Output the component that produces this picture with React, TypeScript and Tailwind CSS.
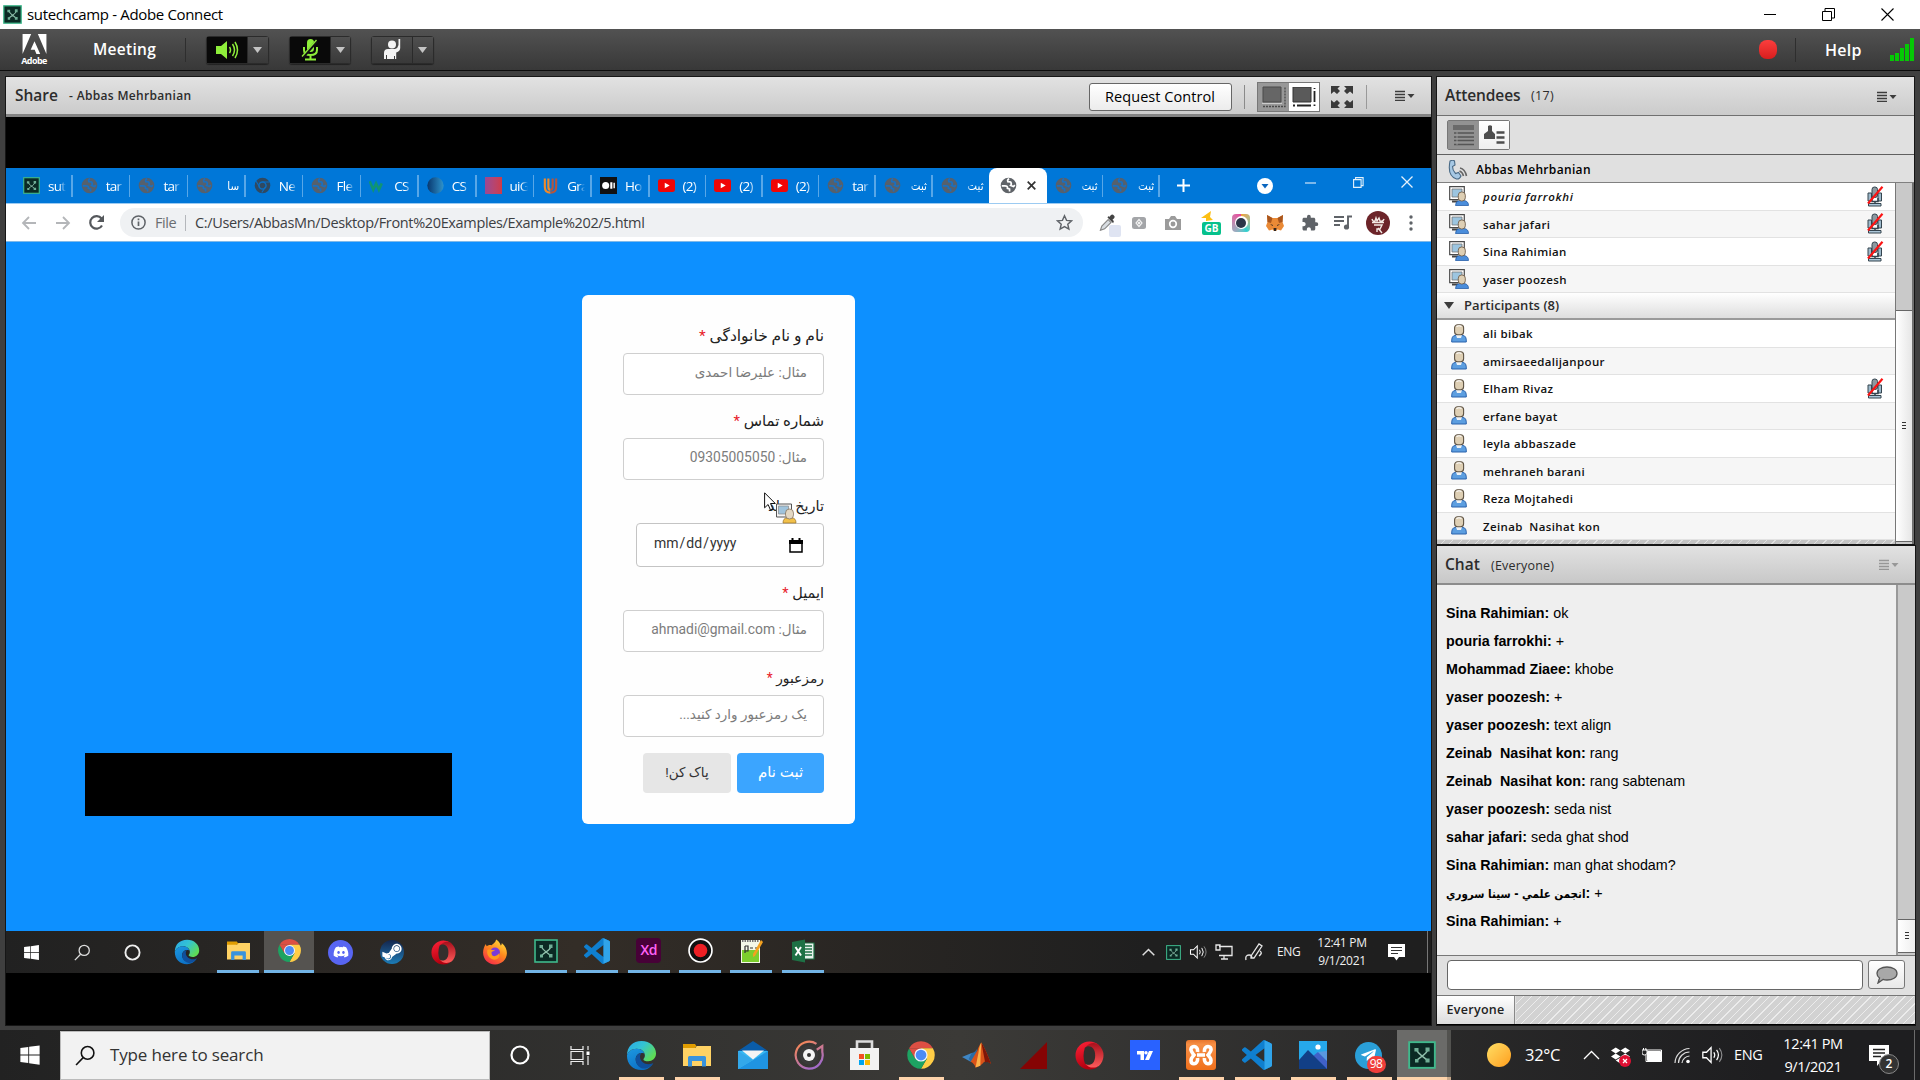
import React from 'react';
import { FaDiscord, FaSteamSymbol, FaWindows, FaTelegramPlane, FaDropbox } from 'react-icons/fa';
import { MdExtension } from 'react-icons/md';

type P = { s?: number };

const Svg = ({ w = 24, h, vb = '0 0 24 24', children, c = '' }: { w?: number; h?: number; vb?: string; children: React.ReactNode; c?: string }) => (
  <svg width={w} height={h ?? w} viewBox={vb} fill="none" className={'shrink-0 ' + c}>{children}</svg>
);

const Connect = ({ s = 18 }: P) => (
  <Svg w={s}>
    <rect x="1" y="1" width="22" height="22" fill="#0b2a24" stroke="#3fb98c" strokeWidth="1.600" />
    <path d="M7 7c2 5 5 5 10 10M17 7c-1 5-5 5-10 10" stroke="#8fbfab" strokeWidth="1.300" />
    <path d="M5.500 6h3.500v3H5.500zM15 5.500h3.500v3.500H15zM6 15.500h3v3H6zM15 15h3.500v3.500H15z" fill="#6fae95" />
  </Svg>
);

const Edge = ({ s = 30 }: P) => (
  <Svg w={s} vb="0 0 32 32">
    <defs>
      <linearGradient id="eg1" x1="0" y1="0" x2="1" y2=".6"><stop offset="0" stopColor="#2aa7e8" /><stop offset=".5" stopColor="#33c3d3" /><stop offset="1" stopColor="#5fdc55" /></linearGradient>
      <linearGradient id="eg2" x1="0" y1="0" x2=".6" y2="1"><stop offset="0" stopColor="#1c98e0" /><stop offset="1" stopColor="#0c6fc4" /></linearGradient>
    </defs>
    <path d="M1 16C1 7 7 1 16 1s15 6 15 13c0 5-4 8-8 8-3 0-5-1-5-2 0-.8 1.500-1.500 1.500-4C19.500 12 16 9 11 9 6 9 2 12 1 16z" fill="url(#eg1)" />
    <path d="M1 16c1-4 5-7 10-7 4 0 7 2 8 5-6-2-9 2-9 6 0 5 4 8 9 8 3 0 6-1 9-4-3 5-7 7-12 7C7 31 1 25 1 16z" fill="url(#eg2)" />
    <path d="M10 20c0-3 2-6 6-6.500-1 1-1.500 2.500-1.500 4 0 4 4 7.500 9 7.500 2 0 3.500-.6 4.800-1.200-2 3-5.300 5.700-9.300 5.700-5 0-9-4.500-9-9.500z" fill="#0f4f9c" />
  </Svg>
);

const Folder = ({ s = 28 }: P) => (
  <Svg w={s} vb="0 0 28 28">
    <path d="M0 3h12l2 3h-2v3H0z" fill="#e09c00" />
    <path d="M0 7h12l2-2h14v20H0z" fill="#ffd264" />
    <path d="M5 25.500V16.500q0-1.500 1.500-1.500h15q1.500 0 1.500 1.500v9h-4V20h-10v5.500z" fill="#3a93dc" />
  </Svg>
);

const Chrome = ({ s = 28 }: P) => (
  <Svg w={s} vb="0 0 48 48">
    <path d="M4.950 13A22 22 0 0 1 43.050 13H24z" fill="#dd4f43" />
    <path d="M43.050 13A22 22 0 0 1 24 46l9.500-16.500L24 13z" fill="#ffcd46" />
    <path d="M24 46A22 22 0 0 1 4.950 13l9.550 16.500h19z" fill="#1da362" />
    <path d="M4.950 13L14.500 29.500 24 13z" fill="#dd4f43" />
    <circle cx="24" cy="24" r="10.500" fill="#f3f6fb" />
    <circle cx="24" cy="24" r="8.600" fill="#4c8bf5" />
  </Svg>
);

const Opera = ({ s = 28 }: P) => (
  <Svg w={s} vb="0 0 28 28">
    <defs>
      <linearGradient id="og" x1="0" y1="0" x2=".3" y2="1"><stop offset="0" stopColor="#ff2238" /><stop offset="1" stopColor="#b3000f" /></linearGradient>
      <linearGradient id="oh" x1="0" y1="0" x2="0" y2="1"><stop offset="0" stopColor="#a8101c" /><stop offset="1" stopColor="#ff5b5b" /></linearGradient>
    </defs>
    <path d="M14 .5a13.500 13.500 0 1 0 0 27 13.500 13.500 0 0 0 9-3.400c-6 3-13.500-.5-13.500-10.100S17 1 23 3.900A13.500 13.500 0 0 0 14 .5z" fill="url(#og)" />
    <path d="M9.500 6.500C15 0 20.500 1.500 23 3.900a13.500 13.500 0 0 1 0 20.200c-3 1.700-9 3.400-13.500-2.600 9 5.500 15-13 0-15z" fill="url(#oh)" />
    <path d="M9.500 6.500C12.500 3.500 19.500 4.500 19.500 14s-7 10.500-10 7.500q-2.500-7 0-15z" fill="#332f2d" />
  </Svg>
);

const VSCode = ({ s = 28 }: P) => (
  <Svg w={s} vb="0 0 100 100">
    <path fillRule="evenodd" d="M96.500 10.800L75.900.9a6.200 6.200 0 0 0-7 1.200L29.400 38.100 12.200 25.100a4.100 4.100 0 0 0-5.300.2L1.400 30.300a4.100 4.100 0 0 0 0 6.100L16.200 50 1.400 63.600a4.100 4.100 0 0 0 0 6.100l5.500 5c1.500 1.400 3.700 1.500 5.300.2l17.200-13L68.900 97.900c1.900 1.900 4.600 2.300 7 1.200l20.600-9.900A6.200 6.200 0 0 0 100 83.600V16.400c0-2.400-1.400-4.600-3.500-5.600zM75 72.700L45.100 50 75 27.300z" fill="#0f7fcf" />
    <path d="M75 .7l21.500 10.100q3.500 1.700 3.500 5.600v67.200q0 3.900-3.500 5.600L75 99.300z" fill="#30a4ea" />
  </Svg>
);

const Firefox = () => (
  <Svg w={26}>
    <defs><linearGradient id="ff" x1=".8" y1="0" x2=".2" y2="1"><stop offset="0" stopColor="#ffe23e" /><stop offset=".45" stopColor="#ff8a1e" /><stop offset="1" stopColor="#f5264b" /></linearGradient></defs>
    <path d="M12 23.500C5.500 23.500 1 18.500 1 12.500c0-3 1-6 2.600-8 .2 1 .4 1.600 1 2.200C6 5.500 8 5.500 9 5.800 10.500 4 12.500 3.500 13 .5c3 2 4 4 4.300 5.500.9-.4 1-1.400.9-2.200C21.500 6.500 23 10 23 13c0 6-5 10.500-11 10.500z" fill="url(#ff)" />
    <circle cx="12" cy="12.500" r="4.600" fill="#7a3bd8" />
    <path d="M5 10c3-1 4 1 7 0-1 2-4 1-3 4 1 3 5 2 7-1 1 6-4 7-7 5.500-3-1.500-5-4.500-4-8.500z" fill="#ff9a1c" />
  </Svg>
);

const Win = ({ s = 22 }: P) => <FaWindows size={s} color="#fff" className="shrink-0" />;

const Mag = ({ s = 20, c = '#fff' }: { s?: number; c?: string }) => (
  <Svg w={s} vb="0 0 20 20"><circle cx="12" cy="7.500" r="6" stroke={c} strokeWidth="1.500" /><path d="M7.800 12L1 19" stroke={c} strokeWidth="1.500" /></Svg>
);

const Globe = ({ active }: { active?: boolean }) => (
  <Svg w={17}>
    <circle cx="12" cy="12" r="11" fill={active ? '#5f6368' : '#56606c'} />
    <path d="M2.500 12.500h4.500q4 0 3.500 3.500l3 1v3.500M13 2.500q-3 1-2 4l4 .5q2 3 0 5l4 1.500 2-2" stroke={active ? '#fff' : '#1a70c0'} strokeWidth="2.400" />
  </Svg>
);

const Speaker = ({ s = 20 }: P) => (
  <Svg w={s} c="text-white"><path d="M2 9v6h4l5 5V4L6 9z" stroke="currentColor" strokeWidth="1.400" /><path d="M14 9q2 3 0 6M17 6.500q4 5.500 0 11" stroke="currentColor" strokeWidth="1.300" /><path d="M20 4.500q5.500 7.500 0 15" stroke="currentColor" strokeWidth="1.200" opacity=".5" /></Svg>
);

const MenuIcon = ({ faint = false }: { faint?: boolean }) => (
  <Svg w={20} h={11} vb="0 0 20 11" c={faint ? 'opacity-40' : ''}><path d="M0 1.500h10M0 4.500h10M0 7.500h10M0 10.500h10" stroke="#3c3c3c" strokeWidth="1.300" /><path d="M12.500 4h7l-3.500 4z" fill="#3c3c3c" /></Svg>
);

const MicMuted = () => (
  <Svg w={17} h={21} vb="0 0 17 21">
    <rect x="5" y="1" width="5.500" height="10.500" rx="2.500" fill="#8d989f" stroke="#34444f" />
    <path d="M1 7h3.500v8H1zM11 7h3.500v8H11z" fill="#9db9cb" stroke="#34444f" /><path d="M5 12v3.500h6V12M8 15v3" stroke="#34444f" strokeWidth="1.500" />
    <path d="M1.500 17.500h12.500v2.500H1.500z" fill="#abc6d8" stroke="#34444f" />
    <path d="M1 17.500L15.500.8" stroke="#fb1313" strokeWidth="2.200" />
  </Svg>
);

const HostIcon = () => (
  <Svg w={20} h={20} vb="0 0 20 20">
    <path d="M.7.7h14.600v13H.7z" fill="#fff" stroke="#4a4a4a" strokeWidth="1.200" />
    <path d="M3 3h10v8H3z" fill="#9cc5e0" stroke="#777" strokeWidth=".8" /><path d="M3 15.500h6" stroke="#444" strokeWidth="2" />
    <path d="M6.500 19.500q0-4.500 4-5h4.500q4.500.5 4.500 5z" fill="#4a8ddb" stroke="#2860a8" strokeWidth=".8" />
    <rect x="9.300" y="6" width="7" height="9" rx="3.200" fill="#decfb4" stroke="#705f4c" strokeWidth=".9" />
  </Svg>
);

const UserIcon = () => (
  <Svg w={16} h={19} vb="0 0 16 19">
    <path d="M.7 18q-.3-6.500 3.500-6.500h7.600q3.800 0 3.500 6.500z" fill="#5c9ee0" stroke="#2a62ac" strokeWidth="1" />
    <path d="M5 11h6l-1 3H6z" fill="#eef2f6" />
    <rect x="3.600" y=".8" width="9" height="10" rx="3" fill="#decfb4" stroke="#5e5344" strokeWidth="1.100" />
    <path d="M5.500 2.500q2.500-1.500 5 0" stroke="#fff" strokeWidth="1.200" />
  </Svg>
);

/* ---------- Adobe Connect top bars ---------- */

const TitleBar = () => (
  <div className="flex h-[29px] items-center bg-white pl-[3px]">
    <Connect s={19} />
    <span className="ml-[5px] text-[15px] leading-none tracking-[-0.34px] text-black">sutechcamp - Adobe Connect</span>
    <div className="ml-auto flex items-center gap-[46px] pr-[26px]">
      <Svg w={12} vb="0 0 12 12"><path d="M0 5.500h12" stroke="#000" /></Svg>
      <Svg w={13} vb="0 0 13 13"><path d="M.5 3.500h9v9h-9zM3 3V.5h9.500V10H10" stroke="#000" /></Svg>
      <Svg w={13} vb="0 0 13 13"><path d="M.5.5l12 12M12.500.5l-12 12" stroke="#000" strokeWidth="1.100" /></Svg>
    </div>
  </div>
);

const ToolButton = ({ children, dark }: { children: React.ReactNode; dark?: boolean }) => (
  <div className="mr-[20px] flex h-[28px] w-[62.500px] rounded-[3px] border border-[#2b2b2b] shadow-[0_1px_1px_#222]">
    <div className={'flex w-[41px] items-center justify-center border-r border-[#2a2a2a] ' + (dark ? 'bg-[#090909]' : 'bg-linear-to-b from-[#4d4d4d] to-[#393939]')}>{children}</div>
    <div className="flex flex-1 items-center justify-center bg-linear-to-b from-[#505050] to-[#393939]">
      <Svg w={9} h={6} vb="0 0 9 6"><path d="M0 0h9L4.500 6z" fill="#c4c4c4" /></Svg>
    </div>
  </div>
);

const ToolBar = () => (
  <div className="flex h-[42px] items-center border-b border-[#0c0c0c] bg-linear-to-b from-[#525252] to-[#383838] pl-[21px]">
    <div className="flex w-[26px] flex-col items-center">
      <Svg w={25} h={21} vb="0 0 25 22"><path d="M0 0h9L0 21zM16 0h9v21zM12.500 7.500L18.500 21h-4l-1.800-4.500H8.500z" fill="#fff" /></Svg>
      <span className="text-[9px] font-bold leading-[11px] tracking-[-0.6px] text-white">Adobe</span>
    </div>
    <span className="ml-[46px] w-[92px] text-[15.500px] font-semibold tracking-[0.3px] text-white">Meeting</span>
    <div className="mr-[20px] h-6 w-px bg-[#2e2e2e]" />
    <ToolButton dark><Svg w={24} h={20} vb="0 0 24 20"><path d="M1 6h5l6-5v18l-6-5H1z" fill="#8eee3a" /><path d="M14.500 7q2 3 0 6M17.500 4q4 6 0 12M20 2q5 8 0 16" stroke="#8eee3a" strokeWidth="1.500" /></Svg></ToolButton>
    <ToolButton dark><Svg w={18} h={22} vb="0 0 18 22"><rect x="6" y="0" width="7" height="13" rx="3.500" fill="#8eee3a" /><path d="M3 8v3q0 5 6.500 5T16 11V8M9.500 16v4M4 20.500h11" stroke="#8eee3a" strokeWidth="2" /><path d="M2 18L16 2" stroke="#111" strokeWidth="3" /><path d="M1 17.500L15.500 1" stroke="#8eee3a" strokeWidth="1.300" /></Svg></ToolButton>
    <ToolButton><Svg w={18} h={21} vb="0 0 18 21"><circle cx="9" cy="5.500" r="4" fill="#f4f4f4" /><path d="M1 20V14q0-4 4-4h7q3-1 3.500-4V0h1.700v9q0 3-4 4.500V20H12v-3h-1v3H4v-4H3v4z" fill="#f4f4f4" /></Svg></ToolButton>
    <div className="ml-auto flex items-center">
      <div className="h-[19px] w-[18px] rounded-[8px] bg-linear-to-b from-[#fb3d3d] to-[#d81d1d]" />
      <div className="ml-[18px] h-6 w-px bg-[#2e2e2e]" />
      <span className="ml-[29px] w-[65px] text-[16px] font-semibold tracking-[0.3px] text-white">Help</span>
      <Svg w={24} h={23} vb="0 0 24 23" c="mr-[6px]"><path d="M0 17h4v6H0zM5 15h4v8H5zM10 10h4v13h-4zM15 6h4v17h-4zM20 0h4v23h-4z" fill="#05c805" /></Svg>
    </div>
  </div>
);

/* ---------- Shared browser ---------- */

const Ou = () => <Svg w={17}><rect width="24" height="24" fill="#111" /><circle cx="8" cy="12" r="5" fill="#fff" /><path d="M14.500 7.500h3v9h-3zM19 8h2v8h-2z" fill="#fff" /></Svg>;
const Yt = () => <Svg w={17}><rect y="3" width="24" height="18" rx="3" fill="#f00505" /><path d="M9.500 8v8l7-4z" fill="#fff" /></Svg>;
const tabs: { i: React.ReactNode; t: string }[] = [
  { i: <Connect s={17} />, t: 'sut' },
  { i: <Globe />, t: 'tar' },
  { i: <Globe />, t: 'tar' },
  { i: <Globe />, t: 'سا' },
  { i: <Svg w={17}><circle cx="12" cy="12" r="11" fill="#2f4961" /><circle cx="12" cy="12" r="5" fill="#2f4961" stroke="#0a6fc5" strokeWidth="2" /><path d="M12 7h10M8 14L3 6M16 14l-5 8" stroke="#0a6fc5" strokeWidth="1.500" /></Svg>, t: 'Ne' },
  { i: <Globe />, t: 'Fle' },
  { i: <Svg w={17}><path d="M1 6l5 12 4-9 4 9 4-9" stroke="#0f9474" strokeWidth="3.600" /></Svg>, t: 'CS' },
  { i: <Svg w={17}><defs><linearGradient id="cs"><stop stopColor="#08386f" /><stop offset="1" stopColor="#2f93cb" /></linearGradient></defs><circle cx="12" cy="12" r="11.500" fill="url(#cs)" /></Svg>, t: 'CS' },
  { i: <div className="h-[17px] w-[17px] shrink-0 bg-linear-to-r from-[#9a4794] to-[#d03a48]" />, t: 'uiG' },
  { i: <Svg w={17}><path d="M4 2v12q0 8 8 8M9 2v12q0 4 3 4" stroke="#f08a2a" strokeWidth="3" /><path d="M20 2v12q0 8-8 8M15 2v12q0 4-3 4" stroke="#b5553c" strokeWidth="3" /></Svg>, t: 'Gra' },
  { i: <Ou />, t: 'Ho' },
  { i: <Yt />, t: '(2)' },
  { i: <Yt />, t: '(2)' },
  { i: <Yt />, t: '(2)' },
  { i: <Globe />, t: 'tar' },
  { i: <Globe />, t: 'ثبت' },
  { i: <Globe />, t: 'ثبت' },
  { i: null, t: '' },
  { i: <Globe />, t: 'ثبت' },
  { i: <Globe />, t: 'ثبت' },
];

const TabStrip = () => (
  <div className="flex h-[35px] items-end bg-[#0077d8] pl-[9px]">
    {tabs.map((t, n) =>
      t.i === null ? (
        <div key={n} className="flex h-[35px] w-[57.500px] shrink-0 items-center justify-center gap-[10px] rounded-t-[8px] bg-white">
          <Globe active />
          <Svg w={9} vb="0 0 9 9"><path d="M.7.7l7.600 7.600M8.300.7L.7 8.300" stroke="#333" strokeWidth="1.700" /></Svg>
        </div>
      ) : (
        <div key={n} className={'flex h-[35px] shrink-0 items-center pl-[8px] ' + (n < 11 ? 'w-[57.700px]' : 'w-[56.600px]')}>
          {t.i}
          {/[؀-ۿ]/.test(t.t) ? (
            <div className="ml-[7px] flex w-[19px] justify-end whitespace-nowrap text-[11.500px] leading-[22px] text-white mask-l-from-70% font-['DejaVu_Sans_Condensed','DejaVu_Sans']">{t.t}</div>
          ) : (
            <div className="ml-[8px] w-[18px] whitespace-nowrap text-[13.500px] leading-[22px] tracking-[-0.7px] text-white mask-r-from-60%">{t.t}</div>
          )}
          <div className={'ml-auto h-[22px] w-[1.500px] ' + (n === 16 ? '' : 'bg-[#58a7e8]')} />
        </div>
      )
    )}
    <div className="flex h-[35px] flex-1 items-center">
      <Svg w={13} vb="0 0 13 13" c="ml-[17px]"><path d="M6.500 0v13M0 6.500h13" stroke="#fff" strokeWidth="2" /></Svg>
      <Svg w={16} vb="0 0 16 16" c="ml-[67px]"><circle cx="8" cy="8" r="8" fill="#fff" /><path d="M4.500 6h7L8 10.500z" fill="#0a66bf" /></Svg>
      <div className="ml-auto flex items-center gap-[37px] pb-[7px] pr-[18px]">
        <Svg w={11} vb="0 0 11 11"><path d="M0 6h11" stroke="#cfe5f8" strokeWidth="1.200" /></Svg>
        <Svg w={11} vb="0 0 11 11"><path d="M.6 2.600h7.500v7.800H.6zM2.600 2.500V.6h7.500v8H8" stroke="#e4f1fb" strokeWidth="1.100" /></Svg>
        <Svg w={12} vb="0 0 12 12"><path d="M.5.5l11 11M11.500.5l-11 11" stroke="#e4f1fb" strokeWidth="1.300" /></Svg>
      </div>
    </div>
  </div>
);

const AddressBar = () => (
  <div className="flex h-[39px] items-center border-b border-t border-b-[#80b9e8] border-t-[#9ccbf2] bg-white pl-[15px]">
    <Svg w={16} vb="0 0 16 16" c="mr-[18px]"><path d="M15 8H2M8 2L2 8l6 6" stroke="#b4b6b9" strokeWidth="1.800" /></Svg>
    <Svg w={16} vb="0 0 16 16" c="mr-[17px]"><path d="M1 8h13M8 2l6 6-6 6" stroke="#b4b6b9" strokeWidth="1.800" /></Svg>
    <Svg w={17} vb="0 0 17 17"><path d="M14 11.500A6.300 6.300 0 1 1 13.500 4.500" stroke="#55585c" strokeWidth="2.200" /><path d="M16 1v7H9z" fill="#55585c" /></Svg>
    <div className="ml-[15px] flex h-[29px] w-[963px] items-center rounded-full bg-[#eff1f3] pl-[11px] text-[14.500px]">
      <Svg w={15} vb="0 0 15 15"><circle cx="7.500" cy="7.500" r="6.600" stroke="#5f6368" strokeWidth="1.500" /><path d="M7.500 6.500V11M7.500 3.500v1.700" stroke="#5f6368" strokeWidth="1.700" /></Svg>
      <span className="ml-[9px] w-[30px] tracking-[-0.4px] text-[#6a6d71]">File</span>
      <div className="h-4 w-px bg-[#b4b7bb]" />
      <span className="ml-[9px] tracking-[-0.35px] text-[#3d4043]">C:/Users/AbbasMn/Desktop/Front%20Examples/Example%202/5.html</span>
      <Svg w={17} c="ml-auto mr-[10px]"><path d="M12 2.500l2.900 6.500 7 .700-5.300 4.700 1.600 7L12 17.800l-6.200 3.600 1.600-7L2.100 9.700l7-.7z" stroke="#5f6368" strokeWidth="2" /></Svg>
    </div>
    <div className="ml-[16px] flex flex-1 items-center">
      <div className="relative flex w-[33px]">
        <Svg w={17}><path d="M2 23l2-6L13 8l4 4L8 21z" fill="#d8dde2" stroke="#888" strokeWidth="1.600" /><path d="M12 5l8 8 1-3-2-2q5-3 2-6t-6 2l-2-1z" fill="#444" /></Svg>
        <div className="absolute left-[10px] top-[11px] h-[12px] w-[12px] rounded-[2px] bg-[#dfe4f2]" />
      </div>
      <Svg w={14} h={12} vb="0 0 14 12" c="mr-[19px]"><rect x="0" y="0" width="14" height="12" rx="2.500" fill="#a3a5a8" /><path d="M7 2.500l3 3.500-3 3.500-3-3.500z" stroke="#f2f2f2" strokeWidth="1.200" /><circle cx="7" cy="6" r="1.200" fill="#f2f2f2" /></Svg>
      <Svg w={16} h={14} vb="0 0 16 14" c="mr-[20px]"><path d="M0 3h4l2-3h4l2 3h4v11H0z" fill="#9b9b9b" /><circle cx="8" cy="8" r="3.300" fill="#9b9b9b" stroke="#fff" strokeWidth="1.700" /></Svg>
      <div className="relative mr-[11px] h-[24px] w-[20px]">
        <Svg w={14} h={12} vb="0 0 14 12"><path d="M10 0L0 7h5v3l7-1-3-3z" fill="#fcbf12" /></Svg>
        <div className="absolute bottom-0 left-[1px] flex h-[13px] w-[19px] items-center justify-center rounded-[2px] bg-[#06c18c] text-[10px] font-bold text-white">GB</div>
      </div>
      <div className="mr-[16px] h-[18px] w-[18px] shrink-0 rounded-[4px] bg-conic from-[#f0a030] via-[#29d0d0] via-40% to-[#e8409c] p-[2.500px]"><div className="flex h-full w-full items-center justify-center rounded-full bg-white"><div className="h-[10px] w-[10px] rounded-full bg-[#2c3548]" /></div></div>
      <Svg w={18} h={16} vb="0 0 18 16" c="mr-[17px]"><path d="M1 0l5.500 3h5L17 0l-.5 7L18 11l-3 4.500-3.500-1L10 16H8l-1.500-1.500-3.500 1L0 11l1.500-4z" fill="#ea8a36" /><path d="M1 0l5.500 3L5 8 1.500 7zM17 0l-5.500 3L13 8l3.500-1z" fill="#a9561e" /><path d="M4 9l3 1-.5 1zM14 9l-3 1 .5 1zM7.500 13h3L10 16H8z" fill="#2e2622" /></Svg>
      <MdExtension size={18} color="#5f6368" className="mr-[15px] shrink-0" />
      <Svg w={18} h={15} vb="0 0 18 15" c="mr-[14px]"><path d="M0 2h10M0 6h10M0 10h6M14 13V1.500h4" stroke="#5f6368" strokeWidth="1.900" /><circle cx="12.500" cy="12" r="2.600" fill="#5f6368" /></Svg>
      <Svg w={24} h={24}><circle cx="12" cy="12" r="12" fill="#6c2429" /><path d="M6 8q1 3 3 2l1-3 1 3 2-3 1 3q3 1 4-2M6 11.500h12M8 14h8l-2 4h-3v3M12 17l4 5" stroke="#f3e9e4" strokeWidth="1.400" /></Svg>
      <Svg w={4} h={16} vb="0 0 4 16" c="ml-[19px]"><circle cx="2" cy="2" r="1.700" fill="#5f6368" /><circle cx="2" cy="8" r="1.700" fill="#5f6368" /><circle cx="2" cy="14" r="1.700" fill="#5f6368" /></Svg>
    </div>
  </div>
);

const Field = ({ label, ph, mt = '', lt = 'text-[14.500px]' }: { label: string; ph: React.ReactNode; mt?: string; lt?: string }) => (
  <div className={'flex flex-col ' + mt}>
    <div className={'h-[28px] leading-[23px] text-[#222] ' + lt}>{label}<span className="text-[#e8202a]"> *</span></div>
    <div className="flex h-[42px] w-[201px] items-center rounded-[4px] border border-[#cfcfcf] bg-white px-[16px] pb-[3px] text-[13.500px] text-[#7c7c7c]">{ph}</div>
  </div>
);

const SharedPage = () => (
  <div className="relative flex h-[689px] justify-center bg-[#0d90ff]">
    <div dir="rtl" className="mt-[53px] h-[529px] w-[273px] rounded-[6px] bg-[#fefefe] pr-[31px] pt-[30px] font-['Roboto','DejaVu_Sans']">
      <Field lt="text-[15.500px]" label="نام و نام خانوادگی" ph="مثال: علیرضا احمدی" />
      <Field mt="mt-[15px]" lt="text-[15px]" label="شماره تماس" ph={<>مثال:&nbsp;<span className="text-[13.800px]">09305005050</span></>} />
      <div className="mt-[15px] h-[28px] text-[14.500px] leading-[23px] text-[#222]">تاریخ تولد</div>
      <div dir="ltr" className="ml-auto flex h-[44px] w-[188px] items-center justify-between rounded-[4px] border border-[#c4c4c4] bg-white pl-[17px] pr-[20px] text-[14px] text-[#333]">
        <span className="pb-[4px]">mm<span className="px-[1px]">/</span>dd<span className="px-[1px]">/</span>yyyy</span>
        <Svg w={14} h={15} vb="0 0 14 15"><path d="M1 3h12v11H1z" stroke="#000" strokeWidth="1.500" /><path d="M0 2h14v4H0zM2.500 0h2v3h-2zM9.500 0h2v3h-2z" fill="#000" /></Svg>
      </div>
      <Field mt="mt-[15px]" label="ایمیل" ph={<>مثال:&nbsp;<span className="text-[13.900px]">ahmadi@gmail.com</span></>} />
      <Field mt="mt-[15px]" lt="text-[13.800px]" label="رمزعبور" ph="یک رمزعبور وارد کنید..." />
      <div className="mt-[16px] flex gap-[6px] text-[13.500px]">
        <div className="flex h-[40px] w-[87px] items-center justify-center rounded-[4px] bg-[#3ba5ff] pb-[2px] text-[15px] text-white">ثبت نام</div>
        <div className="flex h-[40px] w-[88px] items-center justify-center rounded-[4px] bg-[#e6e6e6] pb-[2px] text-[#333]">پاک کن!</div>
      </div>
    </div>
    <div className="absolute left-[79px] top-[511px] h-[63px] w-[367px] bg-black" />
    <div className="absolute left-[758px] top-[250px]">
      <Svg w={34} h={32} vb="0 0 34 32">
        <path d="M12.500 12h15v13h-15z" fill="#f4f4f4" stroke="#555" /><path d="M14.500 14h10v8h-10z" fill="#9fc3dc" stroke="#888" strokeWidth=".7" />
        <path d="M19 31q0-5 4-5h5q4 0 4 5z" fill="#f2c14a" stroke="#98702a" strokeWidth=".7" />
        <rect x="21.500" y="17" width="8" height="10" rx="4" fill="#e3d7c2" stroke="#7b6a55" strokeWidth=".7" />
        <path d="M.6.8v15l3.500-3.300 2.300 5.300 2.400-1-2.300-5.300h4.800z" fill="#fff" stroke="#111" />
      </Svg>
    </div>
  </div>
);

const InnerSlot = ({ children, u, hot }: { children: React.ReactNode; u?: boolean; hot?: boolean }) => (
  <div className="flex w-[51.350px] shrink-0 justify-center">
    <div className={'flex h-[42px] flex-col items-center ' + (hot ? 'w-[50px] bg-[#555350]' : 'w-[42px]')}>
      <div className="flex flex-1 items-center justify-center">{children}</div>
      {u && <div className="h-[3px] w-full bg-[#72b4e6]" />}
    </div>
  </div>
);

const InnerTaskbar = () => (
  <div className="flex h-[42px] items-center overflow-hidden bg-linear-to-r from-[#212121] via-[#332d27] via-40% to-[#1f1f1f] to-80%">
    <div className="flex w-[50px] justify-center"><Win s={17} /></div>
    <div className="flex w-[52px] justify-center"><Mag s={17} c="#ddd" /></div>
    <div className="mr-[5px] flex w-[48px] justify-center"><Svg w={17} vb="0 0 18 18"><circle cx="9" cy="9" r="7.500" stroke="#eee" strokeWidth="2" /></Svg></div>
    <InnerSlot><Edge s={26} /></InnerSlot>
    <InnerSlot u><Folder s={23} /></InnerSlot>
    <InnerSlot u hot><Chrome s={25} /></InnerSlot>
    <InnerSlot><div className="flex h-[25px] w-[25px] items-center justify-center rounded-full bg-[#5865f2]"><FaDiscord size={16} color="#fff" /></div></InnerSlot>
    <InnerSlot><div className="flex h-[24px] w-[24px] items-center justify-center overflow-hidden rounded-full bg-linear-to-b from-[#13264d] to-[#1b7db8]"><FaSteamSymbol size={22} color="#fff" /></div></InnerSlot>
    <InnerSlot><Opera s={25} /></InnerSlot>
    <InnerSlot><Firefox /></InnerSlot>
    <InnerSlot u><Connect s={24} /></InnerSlot>
    <InnerSlot u><VSCode s={26} /></InnerSlot>
    <InnerSlot u><div className="flex h-[25px] w-[25px] items-center justify-center rounded-[4px] bg-[#470137] pb-[2px] text-[14px] font-semibold tracking-[-0.5px] text-[#ff61f6]">Xd</div></InnerSlot>
    <InnerSlot u><Svg w={25}><circle cx="12" cy="12" r="11" fill="#111" stroke="#fff" strokeWidth="1.600" /><circle cx="12" cy="12" r="6.500" fill="#ed1f24" /></Svg></InnerSlot>
    <InnerSlot u><Svg w={24} h={25} vb="0 0 24 25"><path d="M2 2h19v23H2z" fill="#f4f8e8" /><path d="M3 12h17v12H3z" fill="#7ccf2d" /><path d="M3 3h17" stroke="#777" strokeWidth="2" strokeDasharray="1.500 1" /><path d="M6 8v7M6 8h3v5H6M11 10h3M16 10h3" stroke="#333" strokeWidth="1.200" /><path d="M22 2l2 2-8 14-2 1v-3z" fill="#f4a11f" /></Svg></InnerSlot>
    <InnerSlot u><Svg w={24}><path d="M12 4h11v16H12z" fill="#e8f1ec" stroke="#1e7145" strokeWidth="1.200" /><path d="M14 7h7M14 10h7M14 13h7M14 16h7" stroke="#1e7145" strokeWidth="1.300" /><path d="M1 3l13-2.500v23L1 21z" fill="#1e7145" /><path d="M4.500 8l5.500 8.500M10 8l-5.500 8.500" stroke="#fff" strokeWidth="2" /></Svg></InnerSlot>
    <div className="ml-auto mr-[3px] flex h-full items-center border-r border-[#777] pr-[22px] text-[12px] text-[#f0f0f0]">
      <Svg w={13} h={8} vb="0 0 13 8" c="mr-[11px]"><path d="M.7 7.300L6.500 1.500l5.800 5.800" stroke="#ddd" strokeWidth="1.500" /></Svg>
      <Connect s={15} />
      <div className="ml-[8px]"><Speaker s={18} /></div>
      <Svg w={18} h={16} vb="0 0 18 16" c="ml-[8px]"><path d="M4 2.500h13v9H4M9 12v3M6 15h7M1 1h4v5H1z" stroke="#e8e8e8" strokeWidth="1.300" /></Svg>
      <Svg w={18} h={18} vb="0 0 18 18" c="ml-[12px]"><path d="M1 17q-1-5 3-5t2 3M6 13L14 1l3 2-8 12H6zM15 8q3 2-1 5" stroke="#e8e8e8" strokeWidth="1.300" /></Svg>
      <span className="ml-[14px] w-[24px] tracking-[-0.3px]">ENG</span>
      <div className="ml-[12px] flex w-[58px] flex-col items-center leading-[18px] tracking-[-0.3px]"><span>12:41 PM</span><span>9/1/2021</span></div>
      <Svg w={17} h={17} vb="0 0 17 17" c="ml-[17px]"><path d="M0 0h17v13h-6l-2.500 3.500L6 13H0z" fill="#fff" /><path d="M3 3.500h11M3 6.500h11M3 9.500h7" stroke="#333" strokeWidth="1.200" /></Svg>
    </div>
  </div>
);

const SharePod = () => (
  <div className="flex h-[948px] w-[1425px] flex-col bg-black outline outline-[#161616]">
    <div className="flex h-[40px] items-center border-b-[3px] border-[#838383] bg-linear-to-b from-[#e2e2e2] to-[#cbcbcb] pl-[9px] text-[#2c2c2c]">
      <span className="w-[54px] text-[15.500px] font-semibold">Share</span>
      <span className="pt-px text-[12px] font-semibold tracking-[0.33px]">- Abbas Mehrbanian</span>
      <div className="ml-auto mt-[2px] flex h-[28px] w-[143px] items-center justify-center rounded-[3px] border border-[#666] bg-linear-to-b from-white to-[#ececec] text-[14.500px] tracking-[0.05px] text-black">Request Control</div>
      <div className="ml-[12px] mt-[2px] h-[24px] w-[1.500px] bg-[#8a8a8a]" />
      <div className="ml-[12px] mt-[2px] flex h-[30px] w-[63px] border border-[#777]">
        <div className="flex w-[31px] items-center justify-center bg-[#989898]"><Svg w={24} h={22} vb="0 0 24 22"><path d="M1 1h18v15H1z" fill="#666" stroke="#4a4a4a" /><path d="M0 17.500h20" stroke="#ccc" /><path d="M1 20.500h22V1" stroke="#4a4a4a" strokeWidth="1.300" strokeDasharray="2 1" /></Svg></div>
        <div className="flex flex-1 items-center justify-center bg-white"><Svg w={24} h={20} vb="0 0 24 20"><path d="M1 0h18v15H1z" fill="#5a5a5a" stroke="#333" /><path d="M1 18.500h2M5 18.500h14M22.500 1v1M22.500 4v11M22.500 17.500v1.500" stroke="#222" strokeWidth="1.800" /></Svg></div>
      </div>
      <Svg w={22} h={22} vb="0 0 22 22" c="ml-[11px] mt-[2px]"><path d="M0 0h9L6.500 2.500 9 5 6 8 3 5.500 0 8zM22 0v8l-3-2.500L16 8l-3-3 2.500-2.500L13 0zM0 22v-8l3 2.500L6 14l3 3-2.500 2.500L9 22zM22 22h-9l2.500-2.500L13 17l3-3 3 2.500 3-2.500z" fill="#3a3a3a" /></Svg>
      <div className="ml-[13px] mt-[2px] h-[24px] w-px bg-[#999]" />
      <div className="ml-[28px] mr-[16px]"><MenuIcon /></div>
    </div>
    <div className="h-[51px]" />
    <TabStrip />
    <AddressBar />
    <SharedPage />
    <InnerTaskbar />
  </div>
);

/* ---------- Right column ---------- */

const Grip = () => <div className="flex h-[7px] w-[4px] flex-col justify-between"><i className="h-px bg-[#333]" /><i className="h-px bg-[#333]" /><i className="h-px bg-[#333]" /></div>;

const Row = ({ name, host, muted, alt, italic }: { name: string; host?: boolean; muted?: boolean; alt?: boolean; italic?: boolean }) => (
  <div className={'flex h-[27.500px] items-center border-b border-[#e2e2e2] pl-[12px] ' + (alt ? 'bg-[#f6f6f6]' : 'bg-white')}>
    <div className="flex w-[34px] items-center">{host ? <HostIcon /> : <div className="ml-[2px]"><UserIcon /></div>}</div>
    <span className={'whitespace-pre pt-px text-[11.500px] font-semibold text-[#111] ' + (italic ? 'italic tracking-[0.68px]' : 'tracking-[0.35px]')}>{name}</span>
    {muted && <div className="ml-auto mr-[11px]"><MicMuted /></div>}
  </div>
);

const AttendeesPod = () => (
  <div className="flex h-[467px] w-[477px] flex-col overflow-hidden bg-[#cfcfcf] outline outline-[#161616]">
    <div className="flex h-[39px] items-center border-b border-[#707070] bg-linear-to-b from-[#e2e2e2] to-[#cbcbcb] pl-[8px] text-[#2c2c2c]">
      <span className="w-[86px] text-[15.500px] font-semibold tracking-[-0.1px]">Attendees</span>
      <span className="pt-px text-[12.500px] font-medium tracking-[0.3px]">(17)</span>
      <div className="ml-auto mr-[17px]"><MenuIcon /></div>
    </div>
    <div className="flex h-[39px] items-center border-b border-[#606060] bg-[#e0e0e0] pl-[10px]">
      <div className="flex h-[30px] w-[63px] rounded-[2px] border border-[#777]">
        <div className="flex w-[31px] items-center justify-center bg-[#929292]"><Svg w={22} h={22} vb="0 0 22 22"><path d="M0 1h21v5H0z" fill="#6a6a6a" /><path d="M1 9h20M1 13h20M1 16.500h20M1 20.500h20" stroke="#555" strokeWidth="1.700" /><path d="M4 8v13" stroke="#999" /></Svg></div>
        <div className="flex flex-1 items-center justify-center bg-linear-to-b from-white to-[#eee]"><Svg w={21} h={20} vb="0 0 21 20"><path d="M4 1q2-1.500 4 0v5l3 3v5H0V9l4-3z" fill="#4d4d4d" /><path d="M12.500 7.500h8M12.500 12.500h8M12.500 17.500h8" stroke="#4d4d4d" strokeWidth="2.500" /></Svg></div>
      </div>
    </div>
    <div className="flex h-[28px] items-center border-b border-[#808080] bg-[#e0e0e0] pl-[11px]">
      <Svg w={20} h={20} vb="0 0 20 20" c="mt-[2px]"><path d="M2 1q3-1.500 4.500 0l.5 4-2.500 1.500q0 4 3 7l3-1 2.500 3.500q-1.500 3.500-4.500 3Q-1 16 2 1z" fill="#a6c8e4" stroke="#4a6a86" strokeWidth="1.100" /><path d="M12 8q5 1 6.500 8M11.500 11q3 1 4 5" stroke="#666" strokeWidth="1.600" /></Svg>
      <span className="ml-[8px] pt-[2px] text-[12px] font-semibold tracking-[0.33px] text-black">Abbas Mehrbanian</span>
    </div>
    <div className="flex flex-1">
      <div className="flex w-[458px] flex-col">
        <Row name="pouria farrokhi" host muted italic />
        <Row name="sahar jafari" host muted alt />
        <Row name="Sina Rahimian" host muted />
        <Row name="yaser poozesh" host alt />
        <div className="flex h-[27px] items-center border-b-2 border-[#9a9a9a] bg-linear-to-b from-white to-[#dedede] pl-[7px]">
          <Svg w={10} h={7} vb="0 0 10 7"><path d="M0 0h10L5 7z" fill="#3c3c3c" /></Svg>
          <span className="ml-[10px] pt-px text-[13px] font-semibold tracking-[0.05px] text-[#2c2c2c]">Participants (8)</span>
        </div>
        <Row name="ali bibak" />
        <Row name="amirsaeedalijanpour" alt />
        <Row name="Elham Rivaz" muted />
        <Row name="erfane bayat" alt />
        <Row name="leyla abbaszade" />
        <Row name="mehraneh barani" alt />
        <Row name="Reza Mojtahedi" />
        <Row name="Zeinab  Nasihat kon" alt />
        <div className="flex-1 bg-[repeating-linear-gradient(135deg,#c4c4c4_0px,#c4c4c4_5px,#e0e0e0_5px,#e0e0e0_6px)]" />
      </div>
      <div className="flex w-[17px] flex-col border-l border-[#777] bg-[#c9c9c9]">
        <div className="mt-[127px] flex h-[232px] items-center justify-center border-y border-[#666] bg-linear-to-r from-white to-[#e6e6e6] pb-[2px]"><Grip /></div>
      </div>
      <div className="w-[2px] bg-[#707070]" />
    </div>
  </div>
);

const chat: [string, string][] = [
  ['Sina Rahimian', 'ok'], ['pouria farrokhi', '+'], ['Mohammad Ziaee', 'khobe'], ['yaser poozesh', '+'], ['yaser poozesh', 'text align'],
  ['Zeinab  Nasihat kon', 'rang'], ['Zeinab  Nasihat kon', 'rang sabtenam'], ['yaser poozesh', 'seda nist'], ['sahar jafari', 'seda ghat shod'],
  ['Sina Rahimian', 'man ghat shodam?'], ['انجمن علمي - سينا سروري', '+'], ['Sina Rahimian', '+'],
];

const ChatPod = () => (
  <div className="mt-[2px] flex h-[479px] w-[478px] flex-col border-b border-black bg-[#e0e0e0] outline outline-[#161616]">
    <div className="flex h-[39px] items-center border-b-2 border-[#8c8c8c] bg-linear-to-b from-[#e2e2e2] to-[#c8c8c8] pl-[8px] text-[#2c2c2c]">
      <span className="w-[46px] text-[15.500px] font-semibold">Chat</span>
      <span className="pt-[3px] text-[12.500px] font-medium tracking-[0.2px]">(Everyone)</span>
      <div className="ml-auto mr-[16px]"><MenuIcon faint /></div>
    </div>
    <div className="flex h-[371px] border-b border-[#777] bg-[#efefef]">
      <div className="flex-1 whitespace-pre pl-[9px] pt-[14px] font-['Liberation_Sans','DejaVu_Sans'] text-[14.300px] leading-[28px] text-black">
        {chat.map(([n, m], k) => (
          <div key={k} className="h-[28px]">
            {k === 10 ? <bdi className="text-[11.500px] font-bold font-['DejaVu_Sans_Condensed','DejaVu_Sans']">{n}</bdi> : <b>{n}</b>}<b>:</b> {m}
          </div>
        ))}
      </div>
      <div className="flex w-[19px] flex-col justify-end border-l-2 border-[#999] bg-[#c9c9c9]">
        <div className="mb-[2px] flex h-[34px] items-center justify-center border-y border-[#666] bg-linear-to-r from-white to-[#eee] pb-[2px]"><Grip /></div>
      </div>
    </div>
    <div className="flex h-[40px] items-start border-b border-[#777] pl-[10px] pt-[4px]">
      <div className="h-[30px] w-[416px] rounded-[4px] border border-[#666] bg-white" />
      <div className="ml-[5px] flex h-[29px] w-[37px] items-center justify-center rounded-[3px] border border-[#777] bg-linear-to-b from-white to-[#e8e8e8]">
        <Svg w={22} h={18} vb="0 0 22 18"><path d="M11 1c5.500 0 10 2.500 10 6.500S16.500 14 11 14c-1.500 0-3-.200-4-.600L2 17l1.500-5C2 11 1 9.500 1 7.500 1 3.500 5.500 1 11 1z" fill="#a8a8a8" stroke="#555" strokeWidth="1.300" /></Svg>
      </div>
    </div>
    <div className="flex flex-1">
      <div className="flex w-[78px] items-center justify-center border-r border-[#888] bg-linear-to-b from-white to-[#dcdcdc] pt-px text-[12.500px] font-semibold tracking-[0.3px] text-[#222]">Everyone</div>
      <div className="ml-px flex-1 bg-[repeating-linear-gradient(135deg,#d2d2d2_0px,#d2d2d2_5px,#ececec_5px,#ececec_6px)]" />
    </div>
  </div>
);

/* ---------- Desktop taskbar ---------- */

const Slot = ({ children, u, hot }: { children: React.ReactNode; u?: boolean; hot?: boolean }) => (
  <div className={'flex h-[50px] shrink-0 flex-col items-center ' + (hot ? 'w-[50px] bg-[#6b6b69]' : 'w-[56px]')}>
    <div className="flex flex-1 items-center justify-center">{children}</div>
    <div className={'h-[3px] ' + (hot ? 'w-full' : 'w-[45px]') + (u ? ' -mt-[3px] bg-[#fdd3ab]' : ' hidden')} />
  </div>
);

const Taskbar = () => (
  <div className="flex h-[50px] items-center bg-linear-to-r from-[#222] via-[#3b3a37] via-50% to-[#1e1e20] to-92% text-white">
    <div className="flex w-[60px] justify-center"><Win s={22} /></div>
    <div className="flex h-[49px] w-[430px] items-center border border-[#bbb] bg-[#f2f2f2] pl-[14px]">
      <Mag s={21} c="#111" />
      <span className="ml-[14px] text-[17px] tracking-[-0.16px] text-[#333]">Type here to search</span>
    </div>
    <div className="flex w-[60px] justify-center"><Svg w={20} vb="0 0 20 20"><circle cx="10" cy="10" r="8.500" stroke="#fff" strokeWidth="2.200" /></Svg></div>
    <div className="mr-[3px] flex w-[60px] justify-center"><Svg w={20} h={19} vb="0 0 20 19"><path d="M1 0v3.500h12V0M1 19v-3.500h12V19M1 5.500h12v8H1zM18 0v4M18 10v9" stroke="#eee" strokeWidth="1.200" /><path d="M16.500 5.500h3v3.500h-3z" fill="#fff" /></Svg></div>
    <Slot u><Edge s={31} /></Slot>
    <Slot u><Folder s={28} /></Slot>
    <Slot><Svg w={30} h={28} vb="0 0 30 28"><path d="M0 10L15 0l15 10v3H0z" fill="#0a5ca8" /><path d="M0 10h30v18H0z" fill="#38b8f2" /><path d="M0 28L30 10v18z" fill="#1f94e2" /><path d="M0 10l15 9L0 28z" fill="#33a8ea" /><path d="M4 9.500h22L15 18.500z" fill="#f4f4f4" /></Svg></Slot>
    <Slot><Svg w={30} vb="0 0 30 30"><defs><linearGradient id="gr" x1="0" y1="0" x2=".6" y2="1"><stop stopColor="#ff8a4a" /><stop offset="1" stopColor="#a36bc8" /></linearGradient></defs><path d="M22.500 3.800A13.500 13.500 0 1 0 28.300 12V6l-6 4" stroke="url(#gr)" strokeWidth="2.200" /><circle cx="15" cy="15" r="9.500" fill="#3a3a3a" /><circle cx="15" cy="15" r="6" fill="#f5f5f5" /><circle cx="15" cy="15" r="2" fill="#333" /></Svg></Slot>
    <Slot><Svg w={29} h={30} vb="0 0 29 30" c="mr-px"><path d="M7 9V1.500h15V9" stroke="#ddd" strokeWidth="2.600" /><path d="M0 8h29v22H0z" fill="#f2f2f2" /><path d="M9 14h5v5H9z" fill="#f25022" /><path d="M15 14h5v5h-5z" fill="#7fba00" /><path d="M9 20h5v5H9z" fill="#00a4ef" /><path d="M15 20h5v5h-5z" fill="#ffb900" /></Svg></Slot>
    <Slot u><Chrome s={30} /></Slot>
    <Slot><Svg w={29} h={28} vb="0 0 30 28" c="mr-px"><path d="M0 16l10-4 5 4-6 5z" fill="#3f86c4" /><path d="M10 12q4-1 6-5l-2 8-5 6-2-3z" fill="#2b6ba5" /><path d="M9 21l7-12q2-6 4-8 4 6 10 22-4-3-7-2-4 5-9 6-1-4-5-6z" fill="#d95319" /><path d="M20 1q4 6 10 22-4-3-6-1z" fill="#7d1608" /><path d="M14 27l3-15q1-8 3-11-1 16-1 24z" fill="#fbb24a" /></Svg></Slot>
    <Slot><Svg w={27} h={27} vb="0 0 27 27"><path d="M27 0v27H0z" fill="#850404" /></Svg></Slot>
    <Slot><Opera s={29} /></Slot>
    <Slot><div className="flex h-[30px] w-[30px] items-center justify-center bg-[#2962ff]"><Svg w={16} h={9} vb="0 0 16 9"><path d="M0 0h7v9H3.500V3.500H0zM12 0h4l-4 9H8z" fill="#fff" /><circle cx="9" cy="1.800" r="1.700" fill="#fff" /></Svg></div></Slot>
    <Slot u><div className="flex h-[30px] w-[30px] items-center justify-center rounded-[3px] bg-linear-to-b from-[#e8762c] via-[#f68f45] via-15% to-[#f0701a]"><Svg w={24} h={22} vb="0 0 24 22"><path d="M8 11h8M8.500 8C9 4 7 2.500 5 2.500S1.700 4 2 6s1.500 3 3 5c-1.500 2-3 3-3 5.200S3 19.700 5 19.700s4-2 3.500-5.700M15.500 8C15 4 17 2.500 19 2.500S22.300 4 22 6s-1.500 3-3 5c1.500 2 3 3 3 5.200s-1 3.500-3 3.500-4-2-3.500-5.700" stroke="#fff" strokeWidth="3.600" /></Svg></div></Slot>
    <Slot u><VSCode s={30} /></Slot>
    <Slot u><Svg w={28} h={28} vb="0 0 28 28"><path d="M0 0h28v28H0z" fill="#26a8ea" /><path d="M14 15l5-4 9 9v8H14z" fill="#4061c8" /><path d="M28 10v10l-9-9z" fill="#7d8fd8" opacity=".6" /><path d="M0 19L9 9l19 19H0z" fill="#123f86" /><circle cx="19" cy="6" r="2.600" fill="#fff" /></Svg></Slot>
    <Slot u><div className="relative mr-[2px] flex h-[27px] w-[27px] items-center justify-center rounded-full bg-[#2a9fd8]"><FaTelegramPlane size={17} color="#fff" /><div className="absolute left-[12px] top-[14px] flex h-[17px] w-[19px] items-center justify-center rounded-full bg-[#f03e3a] text-[12px] tracking-[-0.5px]">98</div></div></Slot>
    <Slot u hot><Connect s={28} /></Slot>
    <div className="flex h-[50px] w-[4px] flex-col justify-end bg-[#52524f]"><div className="h-[3px] bg-[#c9a98a]" /></div>
    <div className="ml-auto mr-[5px] flex h-full items-center border-r border-[#6b6b6b] text-[14.500px]">
      <div className="h-[24px] w-[24px] rounded-full bg-linear-to-br from-[#fedf63] to-[#ff9d12]" />
      <span className="ml-[14px] w-[58px] pt-px text-[16.500px] tracking-[-0.3px]">32°C</span>
      <Svg w={17} h={10} vb="0 0 17 10"><path d="M1 9l7.500-7.500L16 9" stroke="#fff" strokeWidth="1.300" /></Svg>
      <div className="relative ml-[11px]"><FaDropbox size={19} color="#fff" /><Svg w={12} vb="0 0 12 12" c="absolute left-[8px] top-[9px]"><circle cx="6" cy="6" r="6" fill="#e01033" /><path d="M4 4l4 4M8 4L4 8" stroke="#fff" strokeWidth="1.300" /></Svg></div>
      <Svg w={20} h={14} vb="0 0 20 14" c="ml-[12px]"><path d="M5.500 3.500h13v9h-13z" fill="#fff" stroke="#fff" /><path d="M4 2h15.500v11.500H4V7M0 2h5v3q0 2-2.500 2T0 5zM1.500 0v2M3.800 0v2" stroke="#fff" strokeWidth="1" /></Svg>
      <Svg w={17} h={17} vb="0 0 17 17" c="ml-[12px]"><path d="M1 16A15 15 0 0 1 15.500 1.500M4.500 16A11 11 0 0 1 15.500 5M8 16A8 8 0 0 1 15.500 9" stroke="#ddd" strokeWidth="1.200" /><circle cx="14" cy="14.500" r="1.800" fill="#fff" /></Svg>
      <div className="ml-[10px]"><Speaker s={22} /></div>
      <span className="ml-[11px] w-[29px] tracking-[-0.3px]">ENG</span>
      <div className="ml-[14px] flex w-[72px] flex-col items-center leading-[23px] tracking-[-0.4px]"><span>12:41 PM</span><span>9/1/2021</span></div>
      <div className="relative ml-[20px] mr-[25px]">
        <Svg w={20} h={21} vb="0 0 20 21"><path d="M0 0h20v16h-8l-4 5v-5H0z" fill="#fff" /><path d="M4 4.500h12M4 8h12M4 11.500h8" stroke="#222" strokeWidth="1.300" /></Svg>
        <div className="absolute left-[10px] top-[9px] flex h-[20px] w-[20px] items-center justify-center rounded-full border border-[#888] bg-[#333] text-[12px] font-semibold">2</div>
      </div>
    </div>
  </div>
);

export default function App() {
  return (
    <div className="flex h-[1080px] w-[1920px] flex-col overflow-hidden bg-[#3f3f3f] font-['Open_Sans','DejaVu_Sans',sans-serif]">
      <TitleBar />
      <ToolBar />
      <div className="flex h-[959px] pl-[6px] pt-[6px]">
        <SharePod />
        <div className="ml-[6px] flex flex-col">
          <AttendeesPod />
          <ChatPod />
        </div>
      </div>
      <Taskbar />
    </div>
  );
}
